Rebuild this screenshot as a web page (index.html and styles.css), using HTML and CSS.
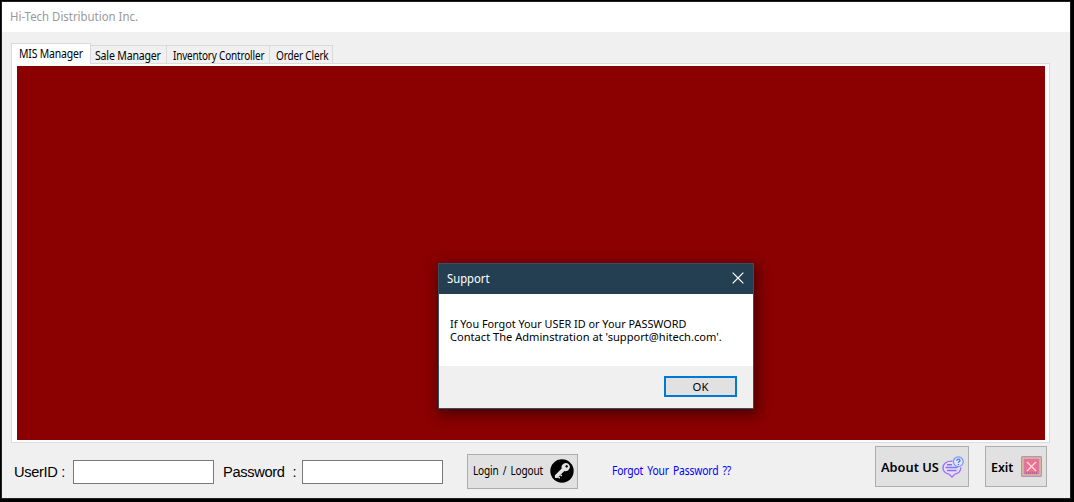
FILE: index.html
```html
<!DOCTYPE html>
<html lang="en">
<head>
<meta charset="utf-8">
<title>Hi-Tech Distribution Inc.</title>
<link rel="stylesheet" href="styles.css">
</head>
<body>
<main class="window">
  <header class="titlebar"><span class="t-title">Hi-Tech Distribution Inc.</span></header>
  <section class="content">
    <nav class="tabs">
      <div class="tab active"><span class="t-mis">MIS Manager</span></div>
      <div class="tab tab-sale"><span class="t-sale">Sale Manager</span></div>
      <div class="tab tab-inv"><span class="t-inv">Inventory Controller</span></div>
      <div class="tab tab-order"><span class="t-order">Order Clerk</span></div>
    </nav>
    <div class="panel"><div class="fill"></div></div>
  </section>
  <footer class="controls">
    <label class="user-label">UserID :</label>
    <input class="field user-field" type="text" aria-label="UserID">
    <label class="pass-label"><span>Password</span><span>:</span></label>
    <input class="field" type="password" aria-label="Password">
    <button class="button login"><span class="t-login">Login / Logout</span>
      <svg class="key" viewBox="0 0 24 24"><circle cx="12" cy="12" r="11.7" fill="#000"/><g transform="rotate(45 12 12)"><path d="M12 2.5a4.2 4.2 0 0 0-2 7.9V20l2 2 1.7-1.8v-9.8A4.2 4.2 0 0 0 12 2.5z" fill="#e4e4e4"/><path d="M13.5 15h2v1.4h-2zM13.5 18h2v1.4h-2z" fill="#e4e4e4"/><circle cx="12" cy="5.4" r="1.2" fill="#000"/></g></svg>
    </button>
    <a class="forgot"><span class="t-forgot">Forgot Your Password ??</span></a>
    <button class="button about"><span class="t-about">About US</span>
      <svg class="chat" viewBox="0 0 22 22" fill="none" stroke-width="1.2"><path d="M10.5 5.2C5 4.7 1 7.6 1 11.8c0 3.4 2.7 5.7 6 6.3l3 2.9 3-2.9c3.4-.7 5.8-3.1 5.8-6.6" fill="#e4dff4" stroke="#a56cf8" stroke-width="1.4"/><circle cx="16.3" cy="5.7" r="4.9" fill="#e1e4f5" stroke="#779aff"/><path d="M14.8 4.7c0-2.2 3.2-2 3.2-.1 0 1.2-1.6 1.2-1.6 2.3M16.4 8v1" stroke="#4f6fea"/><path d="M5 8.8h5M3.5 11.5h12M5 14.4h9.5" stroke="#8373f5" stroke-width="1.5"/></svg>
    </button>
    <button class="button exit"><span class="t-exit">Exit</span>
      <svg class="cross" viewBox="0 0 21 21"><rect x=".7" y=".7" width="19.6" height="19.6" rx="1" fill="#efcf91" stroke="#b690b7" stroke-width="1.4"/><rect x="3" y="3" width="15" height="15" fill="#ee6f93" stroke="#b98aa8"/><path d="M6 6l9 9M15 6l-9 9" stroke="#ffe4dc" stroke-width="1.2"/><path d="M5 17h11" stroke="#994f87" stroke-dasharray="1 1"/></svg>
    </button>
  </footer>
</main>
<section class="dialog" role="dialog">
  <header class="dialog-title"><span class="t-support">Support</span><svg class="close" viewBox="0 0 11 11"><path d="M.6.6l9.8 9.8M10.4.6L.6 10.4" stroke="#fff" stroke-width="1.2"/></svg></header>
  <div class="message"><div><span class="t-m1">If You Forgot Your USER ID or Your PASSWORD</span></div><div><span class="t-m2">Contact The Adminstration at 'support@hitech.com'.</span></div></div>
  <div class="actions"><button class="ok">OK</button></div>
</section>
</body>
</html>
```

FILE: styles.css
```css
* { box-sizing: border-box; }
body { margin: 0; width: 1074px; height: 502px; overflow: hidden; background: #000; font: 12px/16px "Noto Sans", sans-serif; color: #000; }
span { display: inline-block; white-space: nowrap; transform-origin: 0 50%; }
.window { width: 1070px; height: 498px; margin: 1px 0 0 1px; border: 1px solid #222; background: #f0f0f0; }
.titlebar { height: 30px; background: #fff; padding: 7px 0 0 8px; color: #999; }
.content { padding: 11px 0 0 9px; }
.tabs { display: flex; align-items: flex-end; height: 20px; }
.tab { height: 18px; border: 1px solid #d9d9d9; border-width: 1px 1px 0 0; padding: 1px 0 0 4px; line-height: 17px; }
.active { position: relative; width: 80px; height: 21px; margin-bottom: -1px; border-left-width: 1px; background: #fff; padding-left: 7px; }
.tab-sale { width: 76px; }
.tab-inv { width: 103px; padding-left: 6px; }
.tab-order { width: 63px; padding-left: 6px; }
.panel { width: 1039px; height: 380px; border: 1px solid #dcdcdc; background: #fff; padding: 2px 4px 2px 5px; }
.fill { height: 374px; background: #8b0000; }
.controls { display: flex; height: 54px; align-items: flex-start; padding: 3px 0 0 12px; }
.user-label, .pass-label { font: 14.67px/17px "Liberation Sans", sans-serif; margin-top: 18px; }
.user-label { width: 59px; letter-spacing: -.35px; }
.field { width: 141px; height: 24px; margin: 14px 0 0; padding: 2px; background: #fff; border: 1px solid #7a7a7a; border-radius: 0; }
.pass-label { width: 79px; margin-left: 9px; display: flex; gap: 8px; letter-spacing: -.35px; }
.button { display: flex; align-items: center; justify-content: space-between; margin: 0; border: 1px solid #adadad; border-radius: 0; background: #e1e1e1; font: inherit; color: #000; text-align: left; }
.button span { flex: 1; min-width: 0; }
.button svg { flex: none; }
.login { width: 111px; height: 35px; margin: 8px 0 0 24px; padding: 0 3px 2px 5px; }
.key { width: 24px; height: 24px; }
.forgot { width: 120px; margin: 17px 0 0 34px; color: #00f; }
.about { width: 94px; height: 41px; margin-left: 143px; padding: 0 4px 0 5px; font-weight: 600; font-size: 13.33px; }
.chat { width: 22px; height: 22px; }
.exit { width: 62px; height: 41px; margin-left: 16px; padding: 0 4px 0 5px; font-weight: 600; font-size: 13.33px; }
.cross { width: 21px; height: 21px; }
.dialog { position: absolute; left: 438px; top: 263px; width: 316px; height: 146px; border: 1px solid #36505f; background: #fff; box-shadow: 2px 4px 12px 2px rgba(0,0,0,.45); }
.dialog-title { height: 30px; display: flex; align-items: center; justify-content: space-between; padding: 0 9px 0 8px; background: #243f51; color: #fff; }
.close { width: 12px; height: 12px; margin-bottom: 2px; }
.message { height: 72px; padding: 23px 0 0 11px; font-size: 11.3px; line-height: 13px; }
.message div { height: 13px; }
.actions { height: 42px; background: #f0f0f0; padding: 10px 16px 0 0; display: flex; justify-content: flex-end; }
.ok { width: 73px; height: 21px; padding: 0; border: 2px solid #0078d7; border-radius: 0; background: #e1e1e1; font: 11.3px/17px "Noto Sans", sans-serif; color: #000; }
.t-title { transform: scaleX(.95); }
.t-mis, .t-sale, .t-inv, .t-order { letter-spacing: -.2px; }
.t-mis { transform: scaleX(.87); }
.t-sale { transform: scaleX(.88); }
.t-inv { transform: scaleX(.83); }
.t-order { transform: scaleX(.835); }
.t-login { letter-spacing: -.2px; word-spacing: 2px; transform: scaleX(.84); }
.t-forgot { letter-spacing: -.2px; word-spacing: 2px; transform: scaleX(.86); }
.t-about { transform: scaleX(.96); }
.t-exit { transform: scaleX(.93); }
.t-support { transform: scaleX(.94); }
.t-m1 { transform: scaleX(.96); }
.t-m2 { transform: scaleX(.982); }
```
